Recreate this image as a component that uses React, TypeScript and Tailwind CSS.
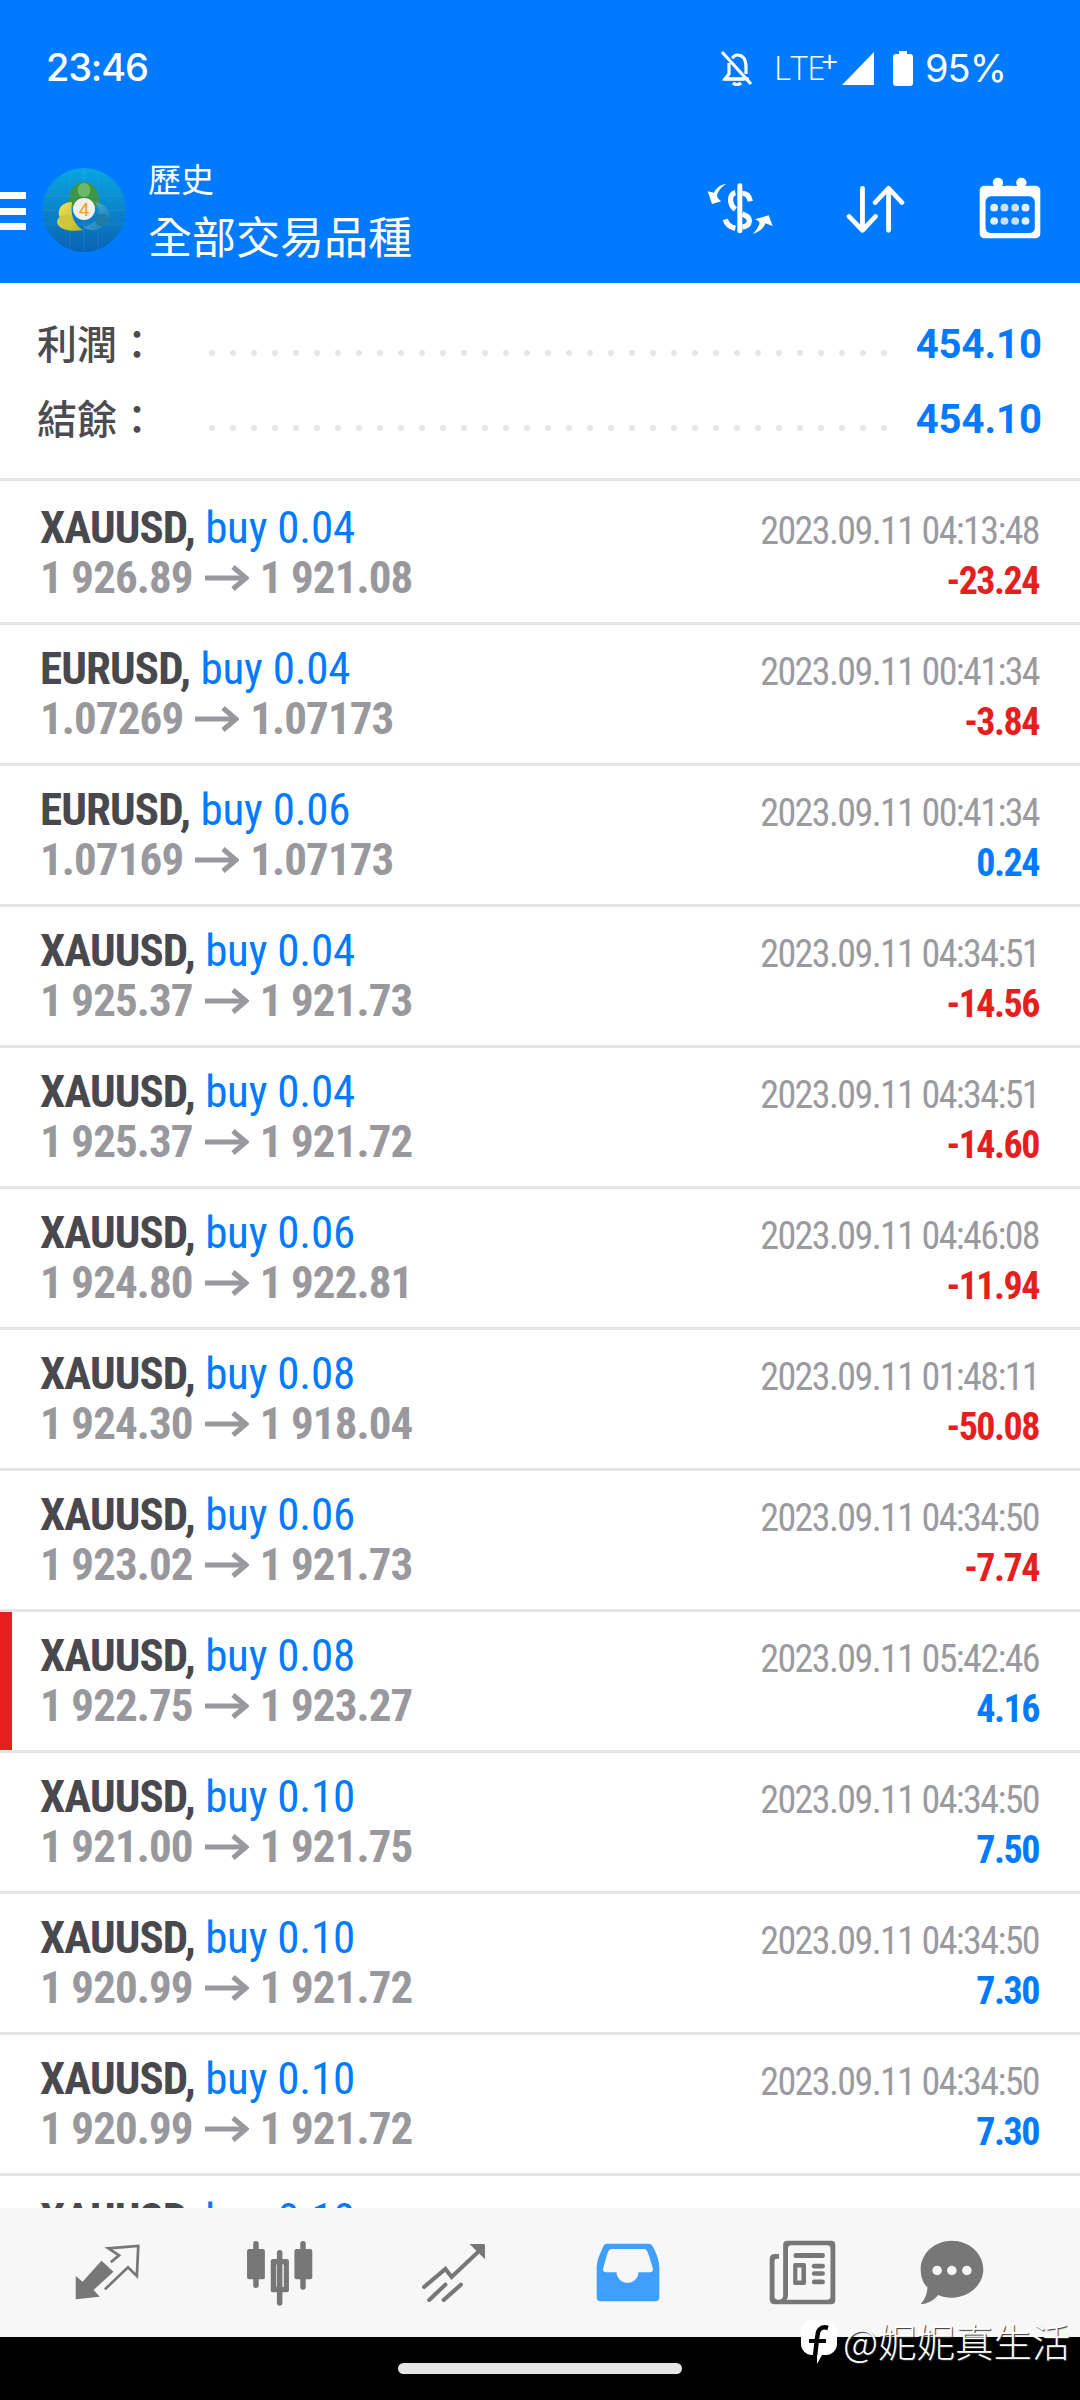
import React from "react";

const rows: [string, string, string, string, string, string][] = [
  ["XAUUSD", "0.04", "1 926.89", "1 921.08", "2023.09.11 04:13:48", "-23.24"],
  ["EURUSD", "0.04", "1.07269", "1.07173", "2023.09.11 00:41:34", "-3.84"],
  ["EURUSD", "0.06", "1.07169", "1.07173", "2023.09.11 00:41:34", "0.24"],
  ["XAUUSD", "0.04", "1 925.37", "1 921.73", "2023.09.11 04:34:51", "-14.56"],
  ["XAUUSD", "0.04", "1 925.37", "1 921.72", "2023.09.11 04:34:51", "-14.60"],
  ["XAUUSD", "0.06", "1 924.80", "1 922.81", "2023.09.11 04:46:08", "-11.94"],
  ["XAUUSD", "0.08", "1 924.30", "1 918.04", "2023.09.11 01:48:11", "-50.08"],
  ["XAUUSD", "0.06", "1 923.02", "1 921.73", "2023.09.11 04:34:50", "-7.74"],
  ["XAUUSD", "0.08", "1 922.75", "1 923.27", "2023.09.11 05:42:46", "4.16"],
  ["XAUUSD", "0.10", "1 921.00", "1 921.75", "2023.09.11 04:34:50", "7.50"],
  ["XAUUSD", "0.10", "1 920.99", "1 921.72", "2023.09.11 04:34:50", "7.30"],
  ["XAUUSD", "0.10", "1 920.99", "1 921.72", "2023.09.11 04:34:50", "7.30"],
  ["XAUUSD", "0.10", "1 920.99", "1 921.72", "2023.09.11 04:34:50", "7.30"],
];

const cjk = "font-['Noto_Sans_CJK_TC','Noto_Sans',sans-serif]";
const roboto = "font-['Roboto',sans-serif]";
const G = "#777777";

function SummaryLine({ label, value }: { label: string; value: string }) {
  return (
    <div className="h-[75px] flex items-center relative">
      <span className={`${cjk} font-medium text-[40px] leading-[75px] text-[#4b4b50] ml-[37px] -mt-[2px] w-[172px] shrink-0`}>{label}</span>
      <div className="flex gap-[15px] mt-[19px]">
        {Array.from({ length: 33 }).map((_, i) => (
          <span key={i} className="block w-[6px] h-[6px] rounded-full bg-[#e6e6e6]" />
        ))}
      </div>
      <span className={`${roboto} font-bold text-[40px] leading-[75px] text-[#007aff] ml-auto mr-[38px] mt-[2px]`}>{value}</span>
    </div>
  );
}

function Arrow() {
  return (
    <svg width="44" height="26" viewBox="0 0 44 26" className="inline-block ml-[12px] mr-[11px]" fill="none" stroke="#98989d" strokeWidth="5">
      <path d="M0 13H41" />
      <path d="M28 2L41 13L28 24" />
    </svg>
  );
}

function Row({ r, marked }: { r: (typeof rows)[number]; marked: boolean }) {
  const neg = r[5].startsWith("-");
  return (
    <div className="relative h-[141px] shrink-0 border-b-[3px] border-[#e5e5e5] flex justify-between pl-[40px] pr-[41px]">
      {marked && <div className="absolute left-0 top-0 bottom-0 w-[12px] bg-[#e61e1e]" />}
      <div className={`${roboto} pt-[19px] [font-stretch:75%] text-[45px] leading-[50px] whitespace-nowrap`}>
        <div>
          <span className="font-bold text-[#48484d] tracking-[-0.9px]">{r[0]},</span>{" "}
          <span className="text-[#007aff] tracking-[-0.2px]">buy {r[1]}</span>
        </div>
        <div className="font-bold text-[#98989d] flex items-center tracking-[-0.9px]">
          <span>{r[2]}</span>
          <Arrow />
          <span>{r[3]}</span>
        </div>
      </div>
      <div className={`${roboto} pt-[22px] [font-stretch:75%] text-right whitespace-nowrap`}>
        <div className="text-[38px] leading-[50px] text-[#9a9a9f] tracking-[-1.6px]">{r[4]}</div>
        <div className={`text-[38px] leading-[50px] font-bold tracking-[-1.5px] ${neg ? "text-[#e61e1e]" : "text-[#007aff]"}`}>{r[5]}</div>
      </div>
    </div>
  );
}

function Logo() {
  return (
    <svg width="84" height="84" viewBox="0 0 84 84" className="shrink-0">
      <defs>
        <linearGradient id="lg" x1="0" y1="0" x2="0" y2="1">
          <stop offset="0" stopColor="#0aa6e2" />
          <stop offset="1" stopColor="#0a62b4" />
        </linearGradient>
        <linearGradient id="ye" x1="0" y1="0" x2="1" y2="1">
          <stop offset="0" stopColor="#ece560" />
          <stop offset="1" stopColor="#bdb31f" />
        </linearGradient>
        <linearGradient id="bl" x1="0" y1="0" x2="1" y2="1">
          <stop offset="0" stopColor="#4cb6e6" />
          <stop offset="1" stopColor="#1d78ae" />
        </linearGradient>
      </defs>
      <circle cx="42" cy="42" r="42" fill="url(#lg)" />
      <path d="M0 28H84M0 42H84M0 56H84M28 0V84M42 0V84M56 0V84" stroke="#ffffff" strokeOpacity="0.07" strokeWidth="1" />
      <path d="M42 14c8 0 13 6 14 13 1 5 3 9 3 13H25c0-4 2-8 3-13 1-7 6-13 14-13z" fill="#3f9448" />
      <ellipse cx="42" cy="22" rx="6.500" ry="7" fill="#6cba68" />
      <path d="M30 34c-6 0-12 3-13 9-1 4 1 6 1 6-3 2-4 6-1 9 4 4 12 6 24 4-9-5-13-15-11-28z" fill="url(#ye)" />
      <ellipse cx="24" cy="53" rx="7" ry="6.500" fill="#cfc63a" />
      <path d="M53 34c7 1 13 5 14 12 1 6-3 11-8 14-6 3-12 3-18-1 8-2 14-6 16-12 1-5-1-9-4-13z" fill="url(#bl)" />
      <ellipse cx="60" cy="52" rx="7" ry="6.500" fill="#1f7ca8" />
      <circle cx="42" cy="41" r="11" fill="#f1f0ea" />
      <text x="42" y="48" textAnchor="middle" fontSize="19" fontFamily="Roboto" fill="#f59a34">4</text>
    </svg>
  );
}

function DollarIcon() {
  return (
    <svg width="80" height="75" viewBox="0 0 240 225" fill="#fff">
      <rect x="112" y="40" width="15" height="150" rx="7" />
      <g fill="none" stroke="#fff" strokeWidth="16">
        <path d="M127 70C140 70 148 78 151 94" />
        <path d="M106 68C96 70 91 80 92 92C93 104 98 112 106 118" />
        <path d="M127 132C142 138 149 144 148 153C147 164 138 170 127 171" />
        <path d="M76 148C80 164 92 172 106 175" />
      </g>
      <path d="M78 42C62 44 48 54 42 68L23 64L36 102L64 94C52 86 50 78 52 72C58 58 66 50 78 42Z" />
      <path d="M158 192C178 186 192 174 196 160L218 168L206 136L164 148C176 152 180 156 178 162C174 172 168 182 158 192Z" />
    </svg>
  );
}

function SortIcon() {
  return (
    <svg width="59" height="49" viewBox="888 555 172 148" preserveAspectRatio="none" fill="none" stroke="#fff" strokeWidth="14" strokeLinecap="round" strokeLinejoin="round">
      <path d="M936 565V692M897 650L936 692L974 650" />
      <path d="M1012 692V565M973 608L1012 565L1051 608" />
    </svg>
  );
}

function CalendarIcon() {
  return (
    <svg width="62" height="62" viewBox="1276 532 180 186" preserveAspectRatio="none">
      <rect x="1278" y="558" width="176" height="158" rx="14" fill="#fff" />
      <rect x="1308" y="545" width="46" height="13" fill="#007aff" />
      <rect x="1376" y="545" width="46" height="13" fill="#007aff" />
      <circle cx="1331" cy="549" r="15" fill="#fff" />
      <circle cx="1399" cy="549" r="15" fill="#fff" />
      <path d="M1311 590h111a16 16 0 0 1 16 16v78a16 16 0 0 1-16 16h-111a16 16 0 0 1-16-16v-78a16 16 0 0 1 16-16z" fill="#007aff" />
      {[1320, 1350, 1381, 1411].map((x, i) => (
        <g key={x} fill={i === 0 || i === 3 ? "#e2efff" : "#c8e0ff"}>
          <circle cx={x} cy="624" r="11.5" />
          <circle cx={x} cy="664" r="11.5" />
        </g>
      ))}
    </svg>
  );
}

export default function App() {
  return (
    <div className="relative w-[1080px] h-[2400px] overflow-hidden flex flex-col bg-white">
      <header className="h-[283px] shrink-0 bg-[#007aff] text-white flex flex-col">
        <div className="h-[150px] shrink-0 relative flex items-start justify-between">
          <span className="ml-[46px] mt-[42px] text-[38px] leading-[50px] font-medium font-['Inter',sans-serif] tracking-[-1.2px]">23:46</span>
          <div className="flex items-center h-[40px] mt-[48px] mr-[74px]">
            <svg width="34" height="36" viewBox="0 0 34 36" fill="none" stroke="#fff" strokeWidth="3.2" className="mr-[20px]">
              <path d="M2 2L31 34" />
              <path d="M12 8c2-2 3-3 5-3 7 0 9 6 9 12v7M9 13v11l-4 5h24" />
              <path d="M4 29h20" />
              <path d="M13 33c2 2 6 2 8 0" />
            </svg>
            <span className="text-[33px] leading-[40px] font-light font-['Open_Sans',sans-serif] tracking-[-0.5px] w-[47px]">LTE</span>
            <span className="text-[30px] leading-[28px] -mt-[14px] font-normal font-['Open_Sans',sans-serif] w-[21px]">+</span>
            <svg width="32" height="33" viewBox="0 0 32 33" className="mr-[19px]" fill="#fff"><path d="M32 0V33H0z" /></svg>
            <svg width="20" height="35" viewBox="0 0 20 35" className="mr-[12px]" fill="#fff"><path d="M6 0h8v3h3a3 3 0 0 1 3 3v26a3 3 0 0 1-3 3H3a3 3 0 0 1-3-3V6a3 3 0 0 1 3-3h3z" /></svg>
            <span className="text-[38px] leading-[40px] font-['Inter',sans-serif] tracking-[-1px]">95%</span>
          </div>
        </div>
        <div className="flex-1 flex items-start relative">
          <div className="w-[26px] h-[38px] mt-[42px] flex flex-col justify-between shrink-0">
            <span className="block h-[7px] bg-white" />
            <span className="block h-[7px] bg-white" />
            <span className="block h-[7px] bg-white" />
          </div>
          <div className="ml-[16px] mt-[18px]"><Logo /></div>
          <div className={`${cjk} ml-[22px] flex flex-col`}>
            <span className="text-[33px] leading-[40px] mt-[8px]">歷史</span>
            <span className="text-[44px] leading-[56px] mt-[9px]">全部交易品種</span>
          </div>
          <div className="ml-auto flex items-start mt-[20px] mr-[39px]">
            <DollarIcon />
            <div className="ml-[66px] mt-[15px]"><SortIcon /></div>
            <div className="ml-[74px] mt-[7px]"><CalendarIcon /></div>
          </div>
        </div>
      </header>

      <section className="h-[198px] shrink-0 border-b-[3px] border-[#e5e5e5] pt-[23px]">
        <SummaryLine label="利潤：" value="454.10" />
        <SummaryLine label="結餘：" value="454.10" />
      </section>

      <main className="flex-1 min-h-0 overflow-hidden mt-[3px] flex flex-col">
        {rows.map((r, i) => (
          <Row key={i} r={r} marked={i === 8} />
        ))}
      </main>

      <nav className="h-[129px] shrink-0 bg-[#f7f7f7] flex items-center pl-[74px]">
        <svg width="67" height="58" viewBox="215 312 195 174" preserveAspectRatio="none">
          <path d="M220 478V408L240 425L295 362L330 395L272 450L290 470Z" fill={G} />
          <path d="M322 367L346 346L315 325L402 318L398 408L372 382L305 448" fill="none" stroke={G} strokeWidth="8" />
        </svg>
        <svg width="68" height="66" viewBox="715 295 198 198" preserveAspectRatio="none" fill={G} className="ml-[105px]">
          <rect x="736" y="298" width="16" height="141" rx="8" />
          <rect x="718" y="322" width="52" height="91" rx="6" />
          <rect x="805" y="325" width="16" height="167" rx="8" />
          <path fillRule="evenodd" d="M793 352h41a6 6 0 0 1 6 6v88a6 6 0 0 1-6 6h-41a6 6 0 0 1-6-6v-88a6 6 0 0 1 6-6zM807 367a4 4 0 0 0-4 4v62a4 4 0 0 0 4 4h14a4 4 0 0 0 4-4v-62a4 4 0 0 0-4-4z" />
          <rect x="873" y="298" width="16" height="146" rx="8" />
          <rect x="856" y="322" width="52" height="91" rx="6" />
        </svg>
        <svg width="64" height="60" viewBox="1224 303 186 180" preserveAspectRatio="none" className="ml-[108px]">
          <path d="M1230 435L1292 381L1310 405L1395 322" fill="none" stroke={G} strokeWidth="12" strokeLinecap="round" />
          <path d="M1245 474L1292 428M1287 474L1337 428" fill="none" stroke={G} strokeWidth="12" strokeLinecap="round" />
          <path d="M1362 306H1403Q1407 306 1407 310V352Z" fill={G} />
        </svg>
        <svg width="64" height="59" viewBox="160 304 187 178" preserveAspectRatio="none" className="ml-[110px]">
          <path d="M192 306H314C322 306 325 312 330 322C338 340 345 358 345 378V468Q345 480 333 480H174Q162 480 162 468V378C162 358 170 340 178 322C182 312 184 306 192 306Z" fill="#3f9fff" />
          <path d="M206 322H300C308 322 310 330 314 340L326 380Q328 392 318 392H284A32 32 0 0 1 220 392H190Q178 392 181 380L192 340C196 330 198 322 206 322Z" fill="#f7f7f7" />
        </svg>
        <svg width="67" height="65" viewBox="663 296 194 194" preserveAspectRatio="none" fill={G} className="ml-[109px]">
          <path fillRule="evenodd" d="M717 298H843Q855 298 855 310V476Q855 488 843 488H680Q665 488 665 473V352Q665 338 680 338H692V352H686Q679 352 679 359V465Q679 474 688 474H692Q704 474 704 462V310Q704 298 717 298ZM728 312Q718 312 718 322V462Q718 470 714 474H832Q841 474 841 465V322Q841 312 832 312Z" />
          <rect x="734" y="335" width="91" height="15" rx="7" />
          <path fillRule="evenodd" d="M738 365H765Q770 365 770 370V425Q770 430 765 430H738Q733 430 733 425V370Q733 365 738 365ZM745 378V417H757V378Z" />
          <rect x="787" y="367" width="38" height="14" rx="7" />
          <rect x="787" y="389" width="38" height="14" rx="7" />
          <rect x="787" y="414" width="38" height="14" rx="7" />
        </svg>
        <svg width="64" height="65" viewBox="1100 296 187 194" preserveAspectRatio="none" className="ml-[84px]">
          <path d="M1193 298C1243 298 1285 336 1285 383C1285 430 1243 468 1193 468C1178 468 1165 465 1153 460C1140 476 1122 487 1102 487C1112 476 1120 462 1122 438C1108 424 1102 404 1102 383C1102 336 1143 298 1193 298Z" fill={G} />
          <ellipse cx="1150" cy="387" rx="14" ry="14" fill="#f7f7f7" />
          <ellipse cx="1193" cy="387" rx="14" ry="14" fill="#f7f7f7" />
          <ellipse cx="1237" cy="387" rx="14" ry="14" fill="#f7f7f7" />
        </svg>
      </nav>

      <footer className="h-[63px] shrink-0 bg-black flex items-start justify-center pt-[26px]">
        <span className="block w-[284px] h-[11px] rounded-full bg-[#e5e5e5]" />
      </footer>

      <div className="absolute left-[801px] top-[2318px] flex items-start [text-shadow:1px_1px_1px_#333]">
        <svg width="36" height="46" viewBox="0 0 36 46" className="mt-[2px]">
          <path d="M11 0H25C31 0 36 5 36 11V24C36 30 31 35 25 35H21L16 44V35H11C5 35 0 30 0 24V11C0 5 5 0 11 0Z" fill="#fff" />
          <path d="M27 8C21 6 17 9 16.500 15L14 36" fill="none" stroke="#000" strokeWidth="4.500" />
          <path d="M8 21H25" stroke="#000" strokeWidth="4" />
        </svg>
        <span className={`${cjk} ml-[6px] text-white font-light text-[38.5px] leading-[44px] whitespace-nowrap`}>@妮妮真生活</span>
      </div>
    </div>
  );
}
